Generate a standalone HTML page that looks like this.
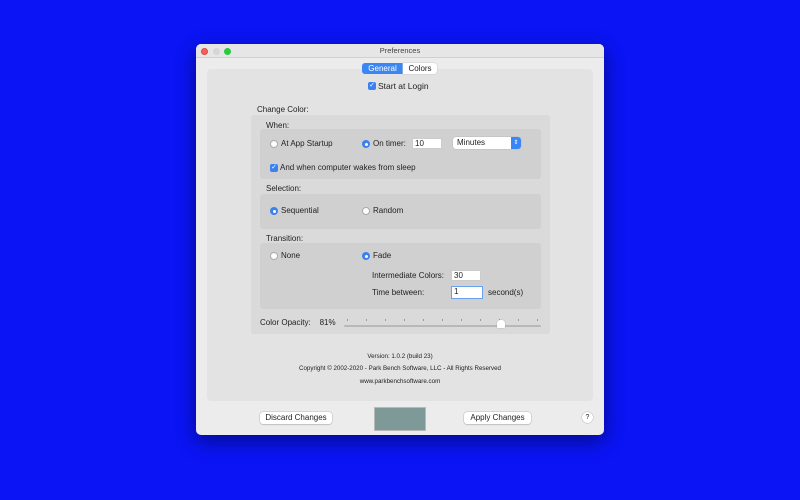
<!DOCTYPE html>
<html><head><style>
*{margin:0;padding:0;box-sizing:border-box}
body{width:800px;height:500px;background:#0a14f5;position:relative;overflow:hidden;font-family:"Liberation Sans",sans-serif;font-size:8px;color:#222}
.a{position:absolute}
.win{left:196px;top:44px;width:408px;height:391px;background:#ececec;border-radius:5px;box-shadow:0 6px 20px rgba(0,0,0,.45);overflow:hidden}
.tb{left:0;top:0;width:408px;height:14px;background:#e6e6e6;border-bottom:1px solid #d0d0d0;text-align:center;font-size:7.5px;line-height:14px;color:#444}
.dot{width:7px;height:7px;border-radius:50%;top:4px}
.rb{width:8px;height:8px;border-radius:50%;background:#fff;border:1px solid #aaa}
.rs{width:8px;height:8px;border-radius:50%;background:#3b82f0}
.rs:after{content:"";position:absolute;left:2.5px;top:2.5px;width:3px;height:3px;border-radius:50%;background:#fff}
.cb{width:8px;height:8px;border-radius:2px;background:#3b82f0;color:#fff;font-size:7px;line-height:8px;text-align:center}
.fld{background:#fff;border:1px solid #ccc;height:11px;padding-left:2px;line-height:9px}
.btn{background:#fff;border-radius:3px;box-shadow:0 0 0 .5px #bbb,0 1px 1px rgba(0,0,0,.15);text-align:center;height:12px;line-height:12px;font-size:8px}
.tk{width:1px;height:2px;background:#999;top:275px}
</style></head><body>
<div class="a win">
 <div class="a tb">Preferences</div>
 <div class="a dot" style="left:5px;background:#fc5f57;border:.5px solid #d94a42"></div>
 <div class="a dot" style="left:17px;background:#d6d6d6"></div>
 <div class="a dot" style="left:28px;background:#2bc840"></div>
 <div class="a" style="left:11px;top:25px;width:386px;height:332px;background:#e3e3e3;border-radius:4px"></div>
 <div class="a" style="left:166px;top:19px;width:41px;height:11px;background:#3b86f5;color:#fff;border-radius:3px 0 0 3px;text-align:center;line-height:11px">General</div>
 <div class="a" style="left:207px;top:19px;width:34px;height:11px;background:#fff;border-radius:0 3px 3px 0;text-align:center;line-height:11px;box-shadow:0 0 0 .5px #ccc">Colors</div>
 <div class="a cb" style="left:172px;top:38px">✓</div>
 <div class="a" style="left:182px;top:37px;font-size:8.5px">Start at Login</div>
 <div class="a" style="left:61px;top:61px">Change Color:</div>
 <div class="a" style="left:55px;top:71px;width:299px;height:219px;background:#dadada;border-radius:3px"></div>
 <div class="a" style="left:70px;top:77px">When:</div>
 <div class="a" style="left:64px;top:85px;width:281px;height:50px;background:#d0d0d0;border-radius:3px"></div>
 <div class="a rb" style="left:74px;top:96px"></div><div class="a" style="left:85px;top:95px">At App Startup</div>
 <div class="a rs" style="left:166px;top:96px"></div><div class="a" style="left:177px;top:95px">On timer:</div>
 <div class="a fld" style="left:216px;top:94px;width:30px">10</div>
 <div class="a" style="left:257px;top:93px;width:68px;height:12px;background:#fff;border-radius:3px;box-shadow:0 0 0 .5px #bbb;padding-left:4px;line-height:12px">Minutes</div>
 <div class="a" style="left:315px;top:93px;width:10px;height:12px;background:#3b86f5;border-radius:0 3px 3px 0;color:#fff;font-size:6px;text-align:center;line-height:12px">⇕</div>
 <div class="a cb" style="left:74px;top:120px">✓</div><div class="a" style="left:84px;top:119px">And when computer wakes from sleep</div>
 <div class="a" style="left:70px;top:140px">Selection:</div>
 <div class="a" style="left:64px;top:150px;width:281px;height:35px;background:#d0d0d0;border-radius:3px"></div>
 <div class="a rs" style="left:74px;top:163px"></div><div class="a" style="left:85px;top:162px">Sequential</div>
 <div class="a rb" style="left:166px;top:163px"></div><div class="a" style="left:177px;top:162px">Random</div>
 <div class="a" style="left:70px;top:190px">Transition:</div>
 <div class="a" style="left:64px;top:199px;width:281px;height:66px;background:#d0d0d0;border-radius:3px"></div>
 <div class="a rb" style="left:74px;top:208px"></div><div class="a" style="left:85px;top:207px">None</div>
 <div class="a rs" style="left:166px;top:208px"></div><div class="a" style="left:177px;top:207px">Fade</div>
 <div class="a" style="left:176px;top:227px">Intermediate Colors:</div>
 <div class="a fld" style="left:255px;top:226px;width:30px">30</div>
 <div class="a" style="left:176px;top:244px">Time between:</div>
 <div class="a fld" style="left:255px;top:242px;width:32px;height:13px;border:1.5px solid #6aa0f0;line-height:10px">1</div>
 <div class="a" style="left:292px;top:244px">second(s)</div>
 <div class="a" style="left:64px;top:274px">Color Opacity:&nbsp;&nbsp;&nbsp;&nbsp;81%</div>
 <div class="a tk" style="left:151px"></div><div class="a tk" style="left:170px"></div><div class="a tk" style="left:189px"></div><div class="a tk" style="left:208px"></div><div class="a tk" style="left:227px"></div><div class="a tk" style="left:246px"></div><div class="a tk" style="left:265px"></div><div class="a tk" style="left:284px"></div><div class="a tk" style="left:303px"></div><div class="a tk" style="left:322px"></div><div class="a tk" style="left:341px"></div>
 <div class="a" style="left:148px;top:281px;width:197px;height:2px;background:#b8b8b8;border-radius:1px"></div>
 <div class="a" style="left:301px;top:276px;width:8px;height:8px;background:#fff;border-radius:3px 3px 1px 1px;box-shadow:0 0 1px #888"></div>
 <div class="a" style="left:61px;top:307px;width:286px;text-align:center;font-size:6.2px;line-height:12.3px">Version: 1.0.2 (build 23)<br>Copyright © 2002-2020 - Park Bench Software, LLC - All Rights Reserved<br>www.parkbenchsoftware.com</div>
 <div class="a btn" style="left:64px;top:368px;width:72px">Discard Changes</div>
 <div class="a" style="left:178px;top:363px;width:52px;height:24px;background:#7e9a98;border:1px solid #b8b8b8"></div>
 <div class="a btn" style="left:268px;top:368px;width:67px">Apply Changes</div>
 <div class="a" style="left:386px;top:368px;width:11px;height:11px;border-radius:50%;background:#fff;box-shadow:0 0 0 .5px #bbb;text-align:center;line-height:11px;font-size:7px">?</div>
</div>
</body></html>
